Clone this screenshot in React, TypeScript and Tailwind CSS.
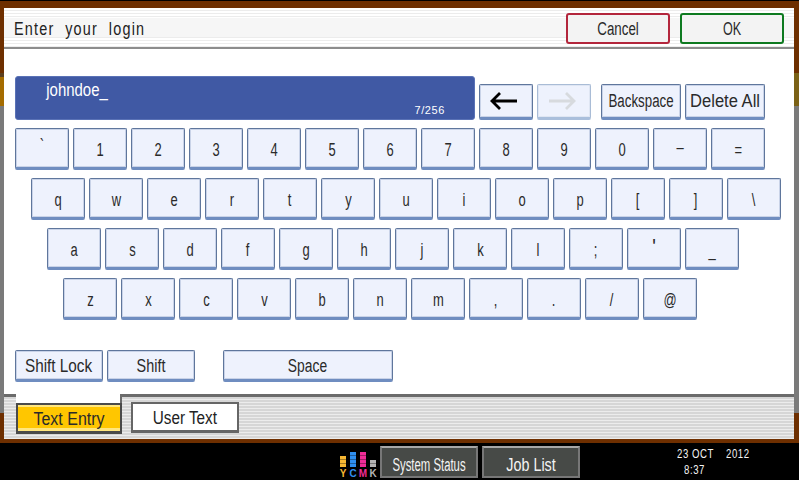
import React from "react";

const FONT = "font-['Liberation_Sans',Arial,sans-serif]";

function Key({ w = "w-[54px]", h = "h-[42px]", pad = "pt-[4px]", children, disabled = false }: { w?: string; h?: string; pad?: string; children?: React.ReactNode; disabled?: boolean }) {
  return (
    <div
      className={`${w} ${h} ${pad} shrink-0 flex items-center justify-center rounded-[2px] border border-b-[3px] pb-[1px] bg-[#eef2fd] text-[#2a2a2a] ${
        disabled
          ? "border-[#a9bcd6] border-b-[#aabfdc] shadow-[inset_0_0_0_1px_#dfe6f3]"
          : "border-[#5f769c] border-b-[#6f8dc0] shadow-[inset_0_0_0_1px_#c9d3e8]"
      }`}
    >
      {children}
    </div>
  );
}

function T({ children, sx = "scale-x-[0.72]", extra = "" }: { children: React.ReactNode; sx?: string; extra?: string }) {
  return <span className={`text-[18px] inline-block ${sx} ${extra} whitespace-nowrap leading-none`}>{children}</span>;
}

const NUDGE: Record<string, string> = {
  "`": "-translate-y-[4px]",
  "'": "-translate-y-[4px] font-bold",
  "–": "-translate-y-[3px]",
};

function Row({ keys, indent }: { keys: string[]; indent: string }) {
  return (
    <div className={`flex gap-1 ${indent}`}>
      {keys.map((k) => (
        <Key key={k}>
          <T extra={NUDGE[k] ?? ""}>{k}</T>
        </Key>
      ))}
    </div>
  );
}

function Ink({ color, segments, letter }: { color: string; segments: number; letter: string }) {
  return (
    <div className="flex flex-col items-center w-[6px]">
      <div className="flex flex-col gap-px" style={{ backgroundColor: color + "aa" }}>
        {Array.from({ length: segments }).map((_, i) => (
          <div key={i} className="w-[6px] h-[3px]" style={{ backgroundColor: color }} />
        ))}
      </div>
      <span className="text-[10px] font-bold leading-[8px] mt-[3px]" style={{ color }}>
        {letter}
      </span>
    </div>
  );
}

function DarkButton({ children, sx }: { children: React.ReactNode; sx: string }) {
  return (
    <div className="w-[98px] h-[32px] border-2 border-[#777] border-t-[#a8a8a8] bg-[#474a47] flex items-center justify-center text-[#f4f4f4] pt-[6px]">
      <T sx={sx}>{children}</T>
    </div>
  );
}

export default function App() {
  return (
    <div className={`${FONT} w-[799px] h-[480px] bg-black overflow-hidden flex flex-col`}>
      <div className="mt-px h-[442px] shrink-0 bg-[#6e2f00] flex">
        <div className="w-1 flex flex-col">
          <div className="h-[72px]" />
          <div className="h-[4px] bg-[#5c4020]" />
          <div className="h-[29px] bg-[#a56c00]" />
          <div className="h-[307px] bg-[#7a7a7a]" />
        </div>
        <div className="w-[790px] h-[431px] mt-[7px] bg-white flex flex-col">
          <div className="h-[41px] shrink-0 border-b-2 border-[#8c8c8c] flex items-start justify-between pl-[10px] pr-[10px] bg-[linear-gradient(to_bottom,transparent_0_10px,#f6f6f6_10px_29px,transparent_29px),repeating-linear-gradient(to_bottom,#ffffff_0_2px,#ececec_2px_3px)]">
            <div className="mt-[10px] text-[#222]">
              <span className="text-[18px] leading-none inline-block origin-left scale-x-[0.8] whitespace-nowrap tracking-[1.5px] [word-spacing:7px]">Enter your login</span>
            </div>
            <div className="flex gap-[10px] mt-[5px]">
              <div className="w-[104px] h-[31px] rounded-[3px] border-2 border-[#b3263c] bg-[#f3f3f3] flex items-center justify-center text-[#2a2a2a]">
                <T sx="scale-x-[0.74]">Cancel</T>
              </div>
              <div className="w-[104px] h-[31px] rounded-[3px] border-2 border-[#0e7a20] bg-[#f3f3f3] flex items-center justify-center text-[#2a2a2a]">
                <T sx="scale-x-[0.7]">OK</T>
              </div>
            </div>
          </div>

          <div className="pl-[11px] pt-[27px] flex flex-col">
            <div className="flex items-end h-[44px]">
              <div className="w-[460px] h-[44px] rounded-[3px] border border-[#5a72b6] bg-[#4059a4] text-white flex flex-col">
                <div className="pl-[24px] pt-[2px] h-[28px]">
                  <T sx="scale-x-[0.83]">johndoe_</T>
                </div>
                <div className="self-end pr-[29px] text-[11px] leading-none tracking-[0.6px]">7/256</div>
              </div>
              <div className="flex gap-1 ml-1">
                <Key h="h-[36px]" pad="pt-[1px]">
                  <svg className="mr-1" width="28" height="18" viewBox="0 0 28 18">
                    <path d="M27 9H2M10 1L2 9l8 8" fill="none" stroke="#000" strokeWidth="2.8" />
                  </svg>
                </Key>
                <Key h="h-[36px]" pad="pt-[1px]" disabled>
                  <svg className="mr-1" width="28" height="18" viewBox="0 0 28 18">
                    <path d="M1 9h25M18 1l8 8-8 8" fill="none" stroke="#d7dade" strokeWidth="2.8" />
                  </svg>
                </Key>
              </div>
              <div className="flex gap-1 ml-[10px]">
                <Key w="w-[80px]" h="h-[36px]" pad="pt-[1px]">
                  <T sx="scale-x-[0.74]">Backspace</T>
                </Key>
                <Key w="w-[80px]" h="h-[36px]" pad="pt-[1px]">
                  <T sx="scale-x-[0.92]">Delete All</T>
                </Key>
              </div>
            </div>

            <div className="flex flex-col gap-2 mt-2">
              <Row indent="" keys={["`", "1", "2", "3", "4", "5", "6", "7", "8", "9", "0", "–", "="]} />
              <Row indent="pl-4" keys={["q", "w", "e", "r", "t", "y", "u", "i", "o", "p", "[", "]", "\\"]} />
              <Row indent="pl-8" keys={["a", "s", "d", "f", "g", "h", "j", "k", "l", ";", "'", "_"]} />
              <Row indent="pl-12" keys={["z", "x", "c", "v", "b", "n", "m", ",", ".", "/", "@"]} />
            </div>

            <div className="flex mt-[30px]">
              <div className="flex gap-1">
                <Key w="w-[88px]" h="h-[32px]" pad="pt-[3px]">
                  <T sx="scale-x-[0.85]">Shift Lock</T>
                </Key>
                <Key w="w-[88px]" h="h-[32px]" pad="pt-[3px]">
                  <T sx="scale-x-[0.8]">Shift</T>
                </Key>
              </div>
              <div className="ml-[28px]">
                <Key w="w-[170px]" h="h-[32px]" pad="pt-[3px]">
                  <T sx="scale-x-[0.77]">Space</T>
                </Key>
              </div>
            </div>
          </div>

          <div className="mt-[12px] flex-1 flex items-start border-t-[3px] border-[#6b6b6b] bg-[repeating-linear-gradient(to_bottom,#d6d6d6_0_2px,#ececec_2px_3px)]">
            <div className="w-[12px]" />
            <div className="-mt-[3px] w-[106px] flex flex-col">
              <div className="h-[9px] w-[106px] bg-white border-r-2 border-[#6b6b6b]" />
              <div className="w-[106px] h-[31px] border-2 border-[#4a4a4a] border-b-[3px] bg-[linear-gradient(to_bottom,#ffe680_0_2px,#ffc600_2px_23px,#ffe680_23px)] flex items-center justify-center text-[#2a2a2a] pt-[1px]">
                <T sx="scale-x-[0.888]">Text Entry</T>
              </div>
            </div>
            <div className="ml-[9px] mt-[5px] w-[108px] h-[31px] border-2 border-[#666] border-b-[3px] bg-white flex items-center justify-center text-[#222] pt-[2px]">
              <T sx="scale-x-[0.85]">User Text</T>
            </div>
          </div>
        </div>
        <div className="w-[5px] flex flex-col">
          <div className="h-[72px]" />
          <div className="h-[33px] bg-[#7b6216]" />
          <div className="h-[307px] bg-[#7a7a7a]" />
        </div>
      </div>

      <div className="flex-1 flex items-start relative">
        <div className="ml-[340px] mt-[9px] h-[26px] w-[36px] flex items-start gap-1">
          <div className="mt-[4px]"><Ink color="#f7b733" segments={3} letter="Y" /></div>
          <Ink color="#2f8ff0" segments={4} letter="C" />
          <Ink color="#f02c96" segments={4} letter="M" />
          <div className="mt-[8px]"><Ink color="#b4b4b4" segments={2} letter="K" /></div>
        </div>
        <div className="flex gap-1 ml-1 mt-[3px]">
          <DarkButton sx="scale-x-[0.63]">System Status</DarkButton>
          <DarkButton sx="scale-x-[0.796]">Job List</DarkButton>
        </div>
        <div className="ml-[97px] mt-[3px] text-[#f4f4f4] text-[12px] leading-[16px] tracking-[0.7px]">
          <div className="flex">
            <span className="w-[49px] inline-block origin-left scale-x-[0.8] whitespace-nowrap">23 OCT</span>
            <span className="inline-block origin-left scale-x-[0.8]">2012</span>
          </div>
          <div className="pl-[7px]">
            <span className="inline-block origin-left scale-x-[0.8]">8:37</span>
          </div>
        </div>
      </div>
    </div>
  );
}
